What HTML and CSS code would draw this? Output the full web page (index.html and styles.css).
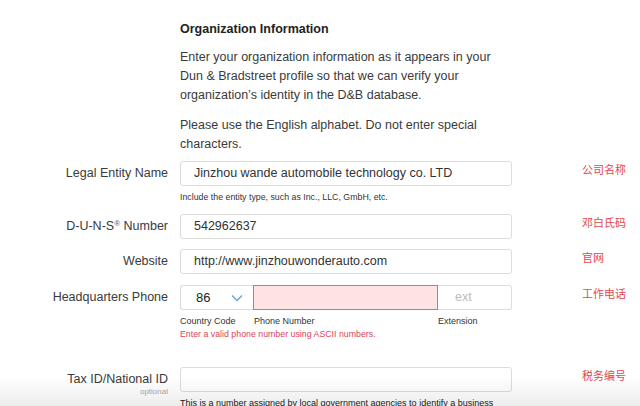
FILE: index.html
```html
<!DOCTYPE html>
<html lang="en">
<head>
  <meta charset="UTF-8" />
  <meta name="viewport" content="width=device-width, initial-scale=1.0" />
  <title>Organization Information</title>
  <link rel="stylesheet" href="styles.css">
</head>
<body>

  <main class="form">
    <section class="intro">
      <h2>Organization Information</h2>
      <p>Enter your organization information as it appears in your Dun &amp; Bradstreet profile so that we can verify your organization’s identity in the D&amp;B database.</p>
      <p class="second">Please use the English alphabet. Do not enter special characters.</p>
    </section>

    <div class="row row-legal">
      <label class="label">Legal Entity Name</label>
      <div class="field">
        <div class="input">Jinzhou wande automobile technology co. LTD</div>
        <div class="help">Include the entity type, such as Inc., LLC, GmbH, etc.</div>
      </div>
      <span class="note">公司名称</span>
    </div>

    <div class="row row-duns">
      <label class="label">D-U-N-S<sup>®</sup> Number</label>
      <div class="field">
        <div class="input">542962637</div>
      </div>
      <span class="note">邓白氏码</span>
    </div>

    <div class="row row-web">
      <label class="label">Website</label>
      <div class="field">
        <div class="input">http://www.jinzhouwonderauto.com</div>
      </div>
      <span class="note">官网</span>
    </div>

    <div class="row row-phone">
      <label class="label">Headquarters Phone</label>
      <div class="field">
        <div class="phone">
          <div class="input code">86
            <svg class="chevron" width="12" height="8" viewBox="0 0 12 8"><path d="M1 1.5 L6 6.5 L11 1.5" fill="none" stroke="#6fa6cf" stroke-width="1.5"/></svg>
          </div>
          <div class="input number"></div>
          <div class="input ext">ext</div>
        </div>
        <div class="phone sub">
          <span>Country Code</span>
          <span>Phone Number</span>
          <span>Extension</span>
        </div>
        <div class="error">Enter a valid phone number using ASCII numbers.</div>
      </div>
      <span class="note">工作电话</span>
    </div>

    <div class="row row-tax">
      <label class="label">Tax ID/National ID<span class="optional">optional</span></label>
      <div class="field">
        <div class="input"></div>
        <div class="help dark">This is a number assigned by local government agencies to identify a business</div>
      </div>
      <span class="note">税务编号</span>
    </div>
  </main>

  <div class="shade"></div>

</body>
</html>
```

FILE: styles.css
```css
body {
  margin: 0;
  font-family: "Liberation Sans", Arial, sans-serif;
  background-color: #fff;
  color: #333;
  overflow: hidden;
}

.intro {
  margin-left: 180px;
  width: 322px;
  padding-top: 20px;
}

.intro h2 {
  margin: 0;
  font-size: 12.5px;
  line-height: 18px;
  font-weight: bold;
  color: #222;
}

.intro p {
  margin: 10px 0 0;
  font-size: 12.5px;
  line-height: 19px;
  color: #3a3a3a;
}

.intro p.second {
  margin-top: 11px;
  line-height: 18.5px;
}

.row {
  display: grid;
  grid-template-columns: 168px 332px 1fr;
  column-gap: 12px;
  align-items: start;
}

.row-legal { margin-top: 8px; }
.row-duns { margin-top: 11px; }
.row-web { margin-top: 10px; }
.row-phone { margin-top: 11px; }
.row-tax { margin-top: 27px; }

.label {
  text-align: right;
  font-size: 12.5px;
  line-height: 25px;
  color: #3a3a3a;
}

.label sup {
  font-size: 8px;
  line-height: 0;
  vertical-align: 4px;
  color: #555;
}

.optional {
  display: block;
  margin-top: -5px;
  font-size: 8px;
  line-height: 10px;
  color: #aaa;
}

.input {
  box-sizing: border-box;
  height: 25px;
  border: 1px solid #dcdcdc;
  border-radius: 3px;
  padding-left: 13px;
  font-size: 12.5px;
  line-height: 23px;
  color: #333;
  background-color: #fff;
}

.help {
  margin-top: 5px;
  font-size: 8.8px;
  line-height: 12px;
  color: #333;
}

.help.dark {
  font-size: 9px;
  color: #222;
}

.phone {
  display: grid;
  grid-template-columns: 73px 185px 74px;
}

.phone .code {
  display: flex;
  align-items: center;
  justify-content: space-between;
  padding: 0 10px 0 15px;
  border-radius: 3px 0 0 3px;
  border-right: none;
  font-size: 13px;
  color: #222;
}

.phone .number {
  border: 1px solid #e26b6b;
  border-radius: 0;
  background-color: #fde3e3;
}

.phone .ext {
  border-left: none;
  border-radius: 0 3px 3px 0;
  padding-left: 17px;
  color: #bbb;
}

.phone.sub {
  margin-top: 5px;
  font-size: 9px;
  line-height: 12px;
  color: #333;
}

.phone.sub span:nth-child(2) { padding-left: 1px; }

.error {
  margin-top: 1px;
  font-size: 8.8px;
  line-height: 12px;
  color: #d9455a;
}

.note {
  padding-left: 58px;
  padding-top: 1px;
  font-family: "Noto Sans CJK SC", sans-serif;
  font-size: 11px;
  line-height: 14px;
  color: #e2474d;
}

.shade {
  position: fixed;
  left: 0;
  right: 0;
  bottom: 0;
  height: 30px;
  background: linear-gradient(rgba(0,0,0,0), rgba(0,0,0,0.07));
  pointer-events: none;
}
```
